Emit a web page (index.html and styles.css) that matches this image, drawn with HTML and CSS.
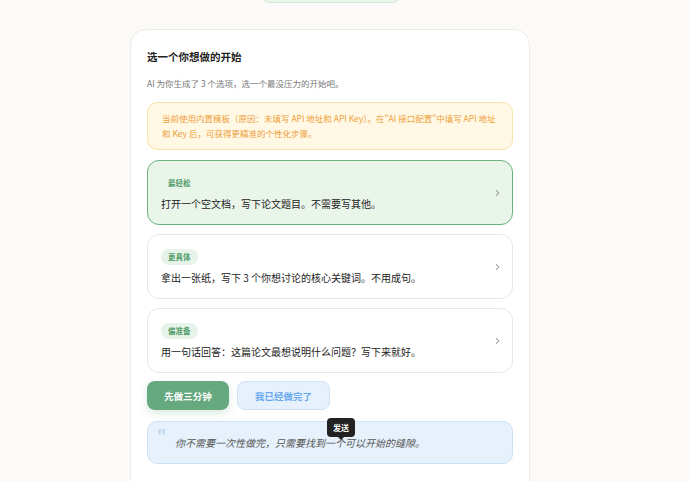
FILE: index.html
```html
<!DOCTYPE html>
<html lang="zh-CN">
<head>
    <meta charset="UTF-8">
    <meta name="viewport" content="width=device-width, initial-scale=1.0">
    <link rel="stylesheet" href="styles.css">
    <title>开始的缝隙</title>
</head>
<body>
    <div class="prev-pill"></div>

    <section class="panel">
        <h2 class="panel-title">选一个你想做的开始</h2>
        <p class="panel-sub">AI 为你生成了 3 个选项，选一个最没压力的开始吧。</p>

        <div class="notice">
            当前使用内置模板（原因：未填写 API 地址和 API Key）。在"AI 接口配置"中填写 API 地址和 Key 后，可获得更精准的个性化步骤。
        </div>

        <div class="options">
            <button type="button" class="option selected">
                <span class="option-body">
                    <span class="tag">最轻松</span>
                    <span class="option-text">打开一个空文档，写下论文题目。不需要写其他。</span>
                </span>
                <svg class="chevron" width="5" height="8" viewBox="0 0 5 8"><polyline points="1.2,1.5 3.8,4 1.2,6.5" fill="none" stroke="#7a7a7a" stroke-width="1" stroke-linecap="round" stroke-linejoin="round"/></svg>
            </button>
            <button type="button" class="option">
                <span class="option-body">
                    <span class="tag">更具体</span>
                    <span class="option-text">拿出一张纸，写下 3 个你想讨论的核心关键词。不用成句。</span>
                </span>
                <svg class="chevron" width="5" height="8" viewBox="0 0 5 8"><polyline points="1.2,1.5 3.8,4 1.2,6.5" fill="none" stroke="#7a7a7a" stroke-width="1" stroke-linecap="round" stroke-linejoin="round"/></svg>
            </button>
            <button type="button" class="option">
                <span class="option-body">
                    <span class="tag">偏准备</span>
                    <span class="option-text">用一句话回答：这篇论文最想说明什么问题？写下来就好。</span>
                </span>
                <svg class="chevron" width="5" height="8" viewBox="0 0 5 8"><polyline points="1.2,1.5 3.8,4 1.2,6.5" fill="none" stroke="#7a7a7a" stroke-width="1" stroke-linecap="round" stroke-linejoin="round"/></svg>
            </button>
        </div>

        <div class="actions">
            <button type="button" class="btn btn-primary">先做三分钟</button>
            <button type="button" class="btn btn-secondary">我已经做完了</button>
        </div>

        <div class="quote">
            <span class="quote-mark">"</span>
            <p class="quote-text">你不需要一次性做完，只需要找到一个可以开始的缝隙。</p>
            <div class="tooltip">发送</div>
        </div>
    </section>
</body>
</html>
```

FILE: styles.css
```css
body {
    margin: 0;
    padding: 0;
    background-color: #fbfaf8;
    font-family: "Noto Sans CJK SC", "Noto Sans", sans-serif;
    color: #222;
    overflow: hidden;
}

.prev-pill {
    width: 140px;
    height: 20px;
    margin: -19px 0 0 260px;
    background-color: #e9f5ea;
    border: 1px solid #d3ead7;
    border-radius: 0 0 10px 10px;
}

.panel {
    box-sizing: border-box;
    width: 400px;
    height: 470px;
    margin: 26px 0 0 130px;
    padding: 19px 16px 18px;
    background-color: #fff;
    border: 1px solid #eeebe5;
    border-radius: 16px;
}

.panel-title {
    margin: 0;
    font-size: 10.5px;
    line-height: 16px;
    font-weight: 700;
    color: #1e1e1e;
}

.panel-sub {
    margin: 11px 0 0;
    font-size: 8.5px;
    line-height: 14px;
    color: #777;
}

.notice {
    margin-top: 12px;
    padding: 8px 14px;
    background-color: #fff8e5;
    border: 1px solid #f8e3aa;
    border-radius: 10px;
    font-size: 8.5px;
    line-height: 15px;
    color: #eea03a;
}

.options {
    display: flex;
    flex-direction: column;
    gap: 9px;
    margin-top: 10px;
}

.option {
    display: flex;
    align-items: center;
    justify-content: space-between;
    height: 65px;
    box-sizing: border-box;
    padding: 14px 12px 13px 13px;
    background-color: #fff;
    border: 1px solid #e9e7e2;
    border-radius: 12px;
    font-family: inherit;
    text-align: left;
    cursor: pointer;
}

.option.selected {
    background-color: #eaf5ea;
    border-color: #68b07e;
}

.option-body {
    display: flex;
    flex-direction: column;
    align-items: flex-start;
    gap: 6px;
}

.tag {
    display: inline-block;
    height: 16px;
    padding: 0 7px;
    border-radius: 8px;
    background-color: #e6f3e8;
    font-size: 7.5px;
    line-height: 16px;
    font-weight: 700;
    color: #4f9c69;
}

.option.selected .tag {
    background-color: transparent;
}

.option-text {
    font-size: 10px;
    line-height: 14px;
    color: #222;
}

.chevron {
    flex: none;
}

.actions {
    display: flex;
    gap: 8px;
    margin-top: 8px;
}

.btn {
    height: 29px;
    box-sizing: border-box;
    border-radius: 8px;
    font-family: inherit;
    font-size: 9.5px;
    font-weight: 700;
    cursor: pointer;
}

.btn-primary {
    width: 82px;
    background-color: #66a97e;
    border: none;
    color: #fff;
    box-shadow: 0 3px 8px rgba(102, 169, 126, 0.25);
}

.btn-secondary {
    width: 93px;
    background-color: #e6f1fc;
    border: 1px solid #cde2f7;
    color: #6aa9ee;
}

.quote {
    position: relative;
    margin-top: 11px;
    padding: 14px 14px 13px 27px;
    background-color: #e6f1fc;
    border: 1px solid #cde2f7;
    border-radius: 10px;
}

.quote-mark {
    position: absolute;
    left: 9px;
    top: 2px;
    font-size: 16px;
    font-weight: 700;
    color: #bcd7f2;
}

.quote-text {
    margin: 0;
    font-size: 10px;
    line-height: 14px;
    font-style: italic;
    color: #555;
}

.tooltip {
    position: absolute;
    left: 179px;
    top: -4px;
    padding: 0 6px;
    height: 19px;
    line-height: 19px;
    background-color: #222;
    border-radius: 4px;
    font-size: 8px;
    font-weight: 700;
    color: #fff;
}

.tooltip::after {
    content: "";
    position: absolute;
    left: 50%;
    bottom: -3px;
    margin-left: -3px;
    border-left: 3px solid transparent;
    border-right: 3px solid transparent;
    border-top: 3px solid #222;
}
```
